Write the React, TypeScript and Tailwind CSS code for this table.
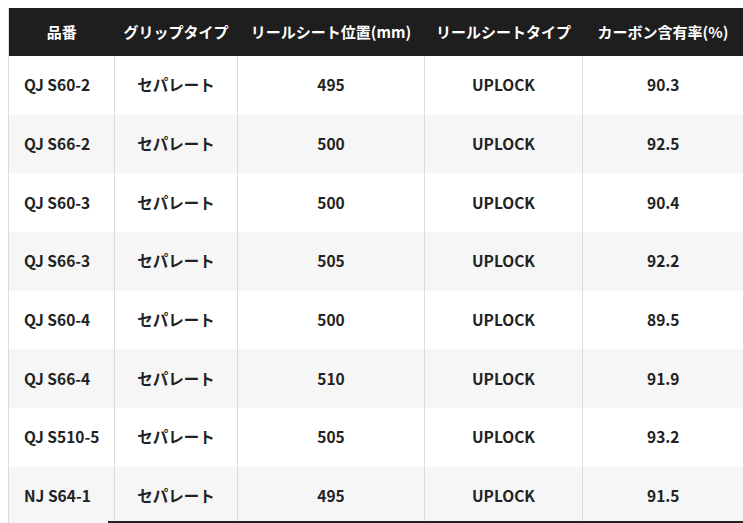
const rows = [
	["QJ S60-2", "セパレート", "495", "UPLOCK", "90.3"],
	["QJ S66-2", "セパレート", "500", "UPLOCK", "92.5"],
	["QJ S60-3", "セパレート", "500", "UPLOCK", "90.4"],
	["QJ S66-3", "セパレート", "505", "UPLOCK", "92.2"],
	["QJ S60-4", "セパレート", "500", "UPLOCK", "89.5"],
	["QJ S66-4", "セパレート", "510", "UPLOCK", "91.9"],
	["QJ S510-5", "セパレート", "505", "UPLOCK", "93.2"],
	["NJ S64-1", "セパレート", "495", "UPLOCK", "91.5"],
]

const headers = ["品番", "グリップタイプ", "リールシート位置(mm)", "リールシートタイプ", "カーボン含有率(%)"]
const widths = ["w-[106px]", "w-[123px]", "w-[187px]", "w-[158px]", "w-[161px]"]

const App = () => {
	return (
		<div
			className="relative h-[523px] w-[743px] overflow-hidden bg-white pt-2 pl-2 text-[#222]"
			style={{ fontFamily: '"Noto Sans CJK JP", "Noto Sans", sans-serif' }}
		>
			<table className="w-[735px] table-fixed border-collapse border-l border-[#dcdcdc]">
				<thead>
					<tr className="h-[48px] bg-[#1e1e1e] text-[15px] text-white">
						{headers.map((h, i) => (
							<th key={h} className={`${widths[i]} p-0 text-center font-bold`}>
								{h}
							</th>
						))}
					</tr>
				</thead>
				<tbody className="text-[15.5px] font-semibold">
					{rows.map((r, ri) => (
						<tr key={r[0]} className={`h-[58.7px] ${ri % 2 === 1 ? "bg-[#f6f6f6]" : "bg-white"}`}>
							{r.map((c, ci) => (
								<td
									key={ci}
									className={`p-0 pb-[1px] ${ci === 0 ? "pl-[15px] text-left" : "border-l border-[#dcdcdc] text-center"}`}
								>
									{c}
								</td>
							))}
						</tr>
					))}
				</tbody>
			</table>
			<div className="absolute bottom-0 left-[108px] h-[2px] w-[635px] bg-[#222]" />
		</div>
	)
}

export default App
